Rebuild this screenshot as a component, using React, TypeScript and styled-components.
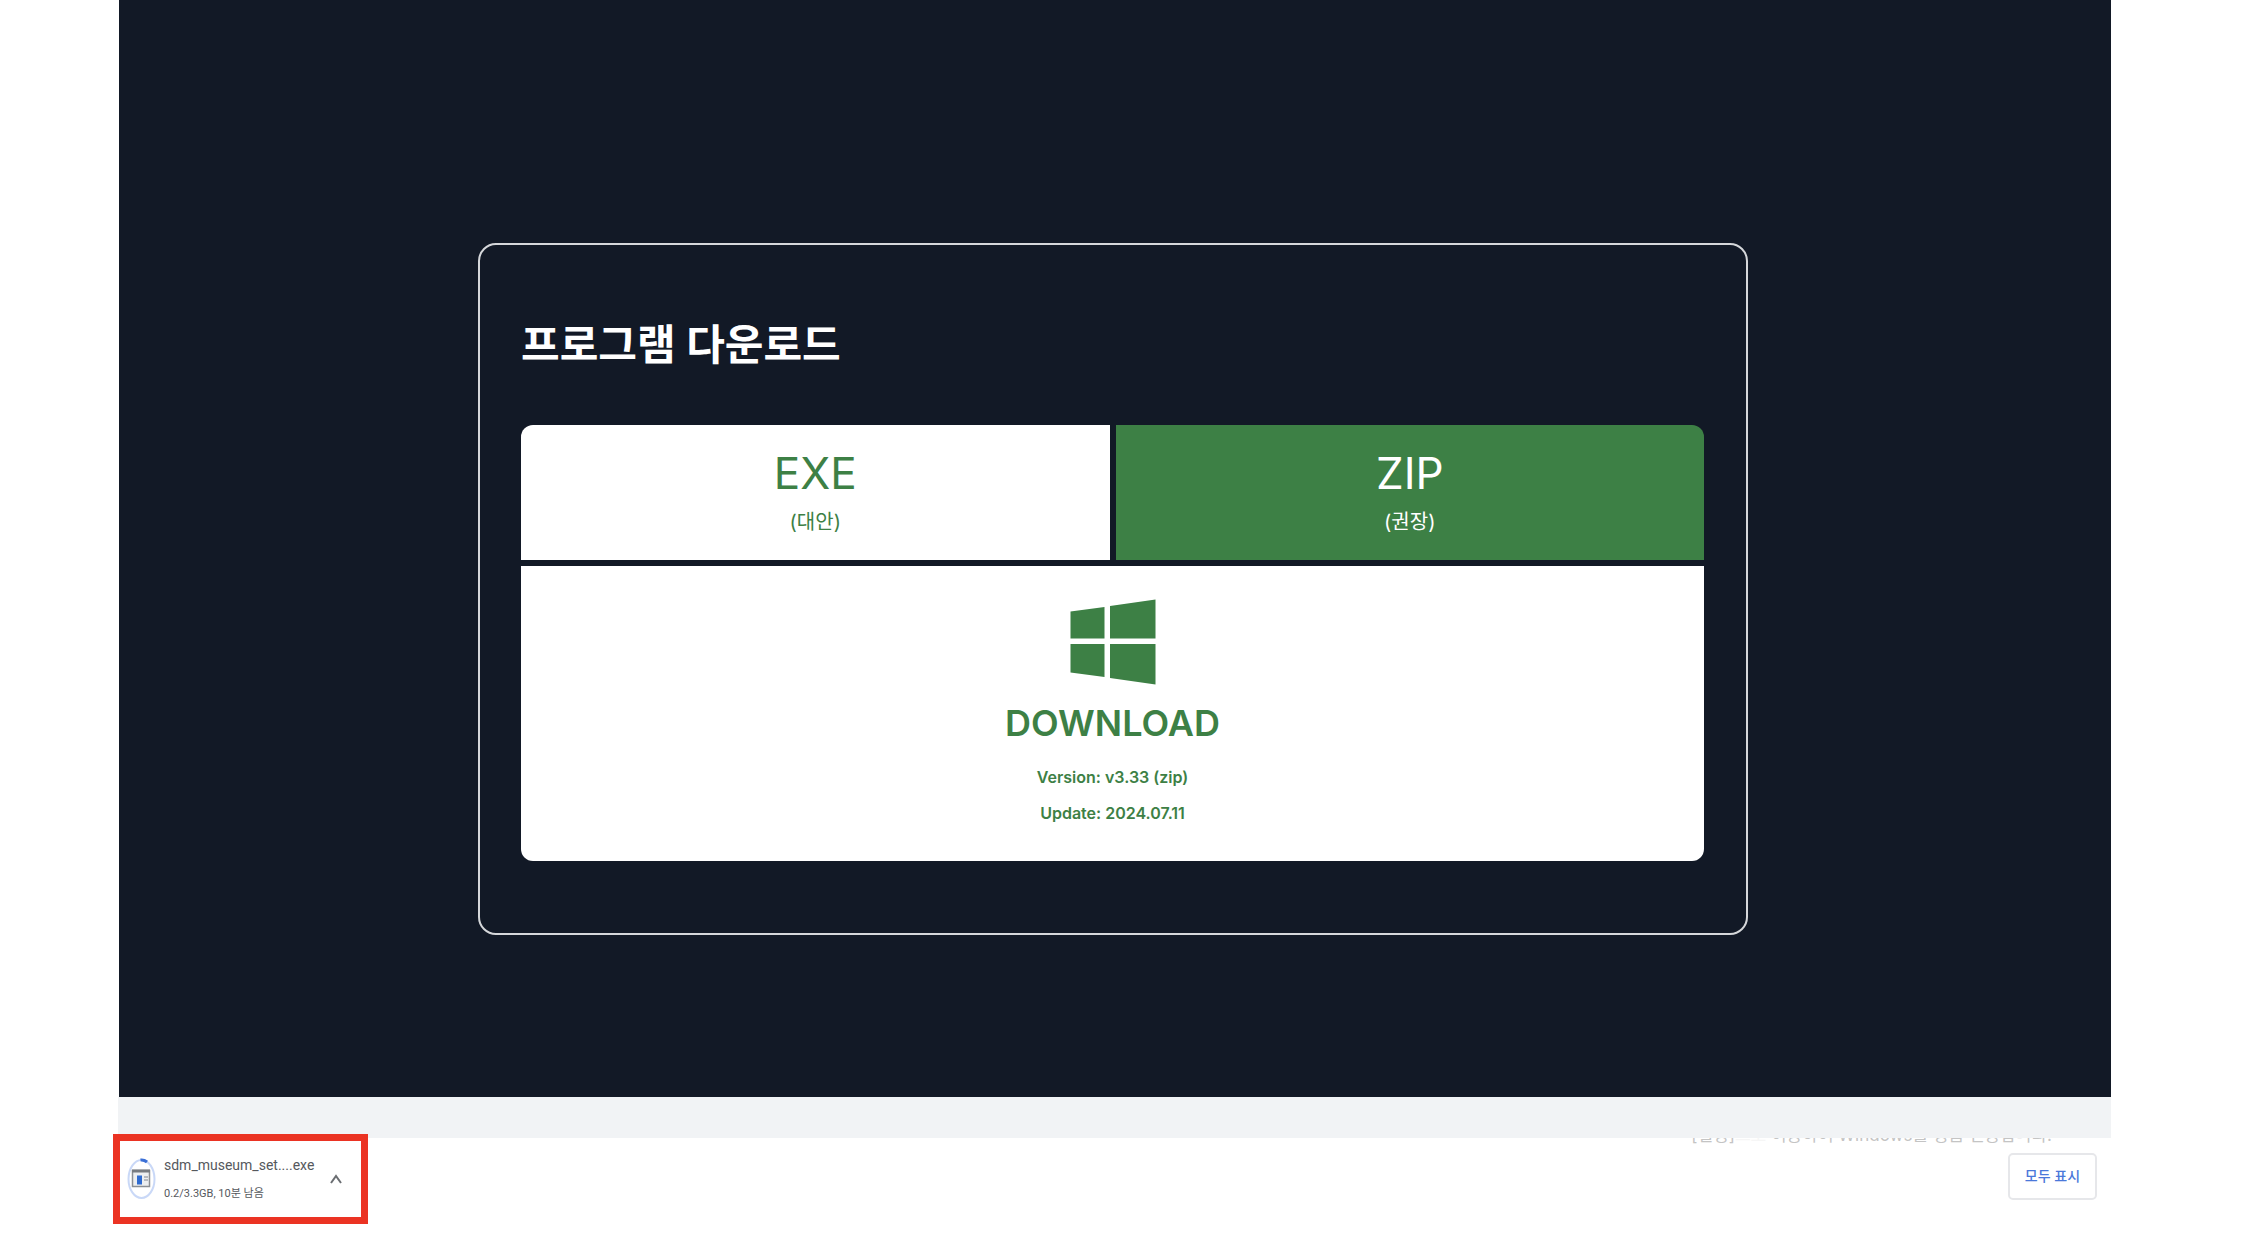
import React from "react";
import styled, { createGlobalStyle } from "styled-components";

const GlobalStyle = createGlobalStyle`
  * { box-sizing: border-box; }
  body { margin: 0; background: #fff; font-family: Inter, "Noto Sans CJK KR", sans-serif; }
  h1, h2, p { margin: 0; }
  button { font: inherit; cursor: pointer; border: 0; }
  svg { flex-shrink: 0; }
`;

const navy = "#121926";
const green = "#3d8045";

const Page = styled.div`
  min-height: 100vh;
  display: flex;
  flex-direction: column;
`;

const Stage = styled.main`
  margin: 0 131px 0 119px;
  padding: 243px 363px 162px 359px;
  background: ${navy};
`;

const Card = styled.section`
  border: 2px solid #d5d7da;
  border-radius: 18px;
  padding: 69px 42px 72px 41px;
`;

const Title = styled.h1`
  color: #fff;
  font-size: 42px;
  line-height: 62px;
  font-weight: 600;
  margin-bottom: 49px;
`;

const Options = styled.div`
  display: grid;
  grid-template-columns: 1fr 1fr;
  gap: 6px;
  border-radius: 12px;
  overflow: hidden;
`;

const FormatButton = styled.button<{ $active?: boolean }>`
  height: 135px;
  padding: 0;
  display: flex;
  flex-direction: column;
  align-items: center;
  justify-content: center;
  color: ${(p) => (p.$active ? "#fff" : green)};
  background: ${(p) => (p.$active ? green : "#fff")};
`;

const FormatName = styled.span`
  font-size: 44px;
  line-height: 58px;
`;

const FormatNote = styled.span`
  font-size: 20px;
  line-height: 40px;
`;

const DownloadButton = styled.button`
  grid-column: 1 / -1;
  background: #fff;
  color: ${green};
  padding: 33px 0 30px;
  display: flex;
  flex-direction: column;
  align-items: center;
  font-weight: 600;
`;

const DownloadLabel = styled.span`
  font-size: 36px;
  line-height: 44px;
  margin: 16px 0 14px;
`;

const Detail = styled.span`
  font-size: 16px;
  line-height: 36px;
`;

const Strip = styled.div`
  margin: 0 131px 0 118px;
  height: 41px;
  background: #f1f3f5;
`;

const Shelf = styled.footer`
  flex: 1;
  margin: 0 145px 0 113px;
  display: flex;
  justify-content: space-between;
  align-items: flex-start;
`;

const Item = styled.div`
  position: relative;
  width: 255px;
  height: 90px;
  margin-top: -4px;
  padding: 0 19px 0 7px;
  border: 7px solid #eb3323;
  background: #fff;
  display: flex;
  align-items: center;
  gap: 8px;
  font-family: Roboto, "Noto Sans CJK KR", sans-serif;
`;

const FileInfo = styled.div`
  flex: 1;
  padding-top: 4px;
  white-space: nowrap;
`;

const FileName = styled.p`
  font-size: 14px;
  line-height: 26px;
  color: #55585d;
`;

const Progress = styled.p`
  font-size: 11px;
  line-height: 32px;
  color: #55585d;
`;

const IconButton = styled.button`
  padding: 0;
  background: none;
  display: flex;
`;

const ShelfEnd = styled.div`
  display: flex;
  flex-direction: column;
  align-items: flex-end;
`;

const Notice = styled.div`
  height: 6px;
  margin-right: 45px;
  overflow: hidden;
  display: flex;
  align-items: flex-end;
`;

const NoticeText = styled.p`
  font-size: 17px;
  line-height: 18px;
  color: #c4c4c4;
  white-space: nowrap;
`;

const Faded = styled.span`
  color: #f6f6f6;
`;

const ShowAll = styled.button`
  margin-top: 9px;
  width: 89px;
  height: 47px;
  padding: 0 0 3px;
  border: 2px solid #e6e7ea;
  border-radius: 5px;
  background: #fff;
  color: #4a78da;
  font-size: 14px;
  font-weight: 500;
`;

const WindowsLogo = () => (
  <svg width="86" height="86" viewBox="0 0 86 86" fill={green} aria-hidden="true">
    <path d="M.5 12.500 34.500 8v31.500H.5zM40 7 85.500 .5v39H40zM.5 45H34.500v33L.5 73.500zM40 45h45.500v40.500L40 79z" />
  </svg>
);

const FileIcon = () => (
  <svg width="29" height="42" viewBox="0 0 29 42" fill="none" aria-hidden="true">
    <ellipse cx="14.5" cy="21" rx="13" ry="19" stroke="#c9d8f7" strokeWidth="2" />
    <path d="M13.500 2Q17 1.500 20 4" stroke="#3b6fd6" strokeWidth="3" />
    <path d="M5.500 12.500h17v16h-17z" fill="#eceef0" stroke="#8b8f94" strokeWidth="1.500" />
    <path d="M5 13h18" stroke="#777b80" strokeWidth="3" />
    <path d="M10 17.500h5v9h-5z" fill="#2f6bd0" />
    <path d="M17 19h4M17 22h4" stroke="#a5a9ae" strokeWidth="1.500" />
  </svg>
);

const Chevron = () => (
  <svg width="12" height="10" viewBox="0 0 12 10" fill="none" aria-hidden="true">
    <path d="M1 9 6 2l5 7" stroke="#6b6e72" strokeWidth="2" />
  </svg>
);

export default function App() {
  return (
    <Page>
      <GlobalStyle />
      <Stage>
        <Card>
          <Title>프로그램 다운로드</Title>
          <Options>
            <FormatButton type="button">
              <FormatName>EXE</FormatName>
              <FormatNote>(대안)</FormatNote>
            </FormatButton>
            <FormatButton type="button" $active>
              <FormatName>ZIP</FormatName>
              <FormatNote>(권장)</FormatNote>
            </FormatButton>
            <DownloadButton type="button">
              <WindowsLogo />
              <DownloadLabel>DOWNLOAD</DownloadLabel>
              <Detail>Version: v3.33 (zip)</Detail>
              <Detail>Update: 2024.07.11</Detail>
            </DownloadButton>
          </Options>
        </Card>
      </Stage>
      <Strip />
      <Shelf>
        <Item>
          <FileIcon />
          <FileInfo>
            <FileName>sdm_museum_set....exe</FileName>
            <Progress>0.2/3.3GB, 10분 남음</Progress>
          </FileInfo>
          <IconButton type="button" aria-label="메뉴">
            <Chevron />
          </IconButton>
        </Item>
        <ShelfEnd>
          <Notice>
            <NoticeText>
              [설정]<Faded>으로</Faded> 이동하여 Windows를 정품 인증합니다.
            </NoticeText>
          </Notice>
          <ShowAll type="button">모두 표시</ShowAll>
        </ShelfEnd>
      </Shelf>
    </Page>
  );
}
